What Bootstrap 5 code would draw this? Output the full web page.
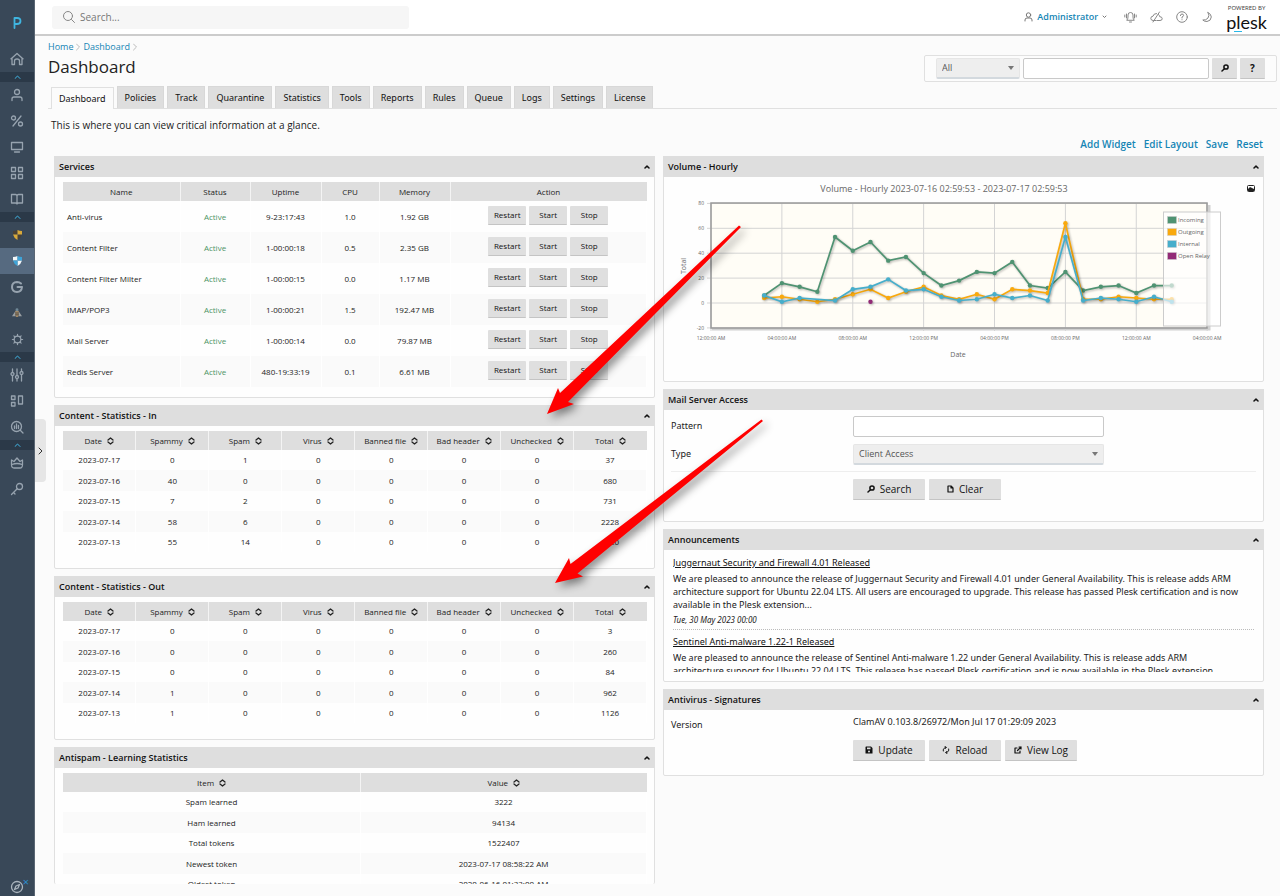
<!DOCTYPE html>
<html lang="en">
<head>
<meta charset="utf-8">
<meta name="viewport" content="width=device-width, initial-scale=1">
<title>Dashboard - Plesk</title>
<link href="https://cdn.jsdelivr.net/npm/bootstrap@5.3.0/dist/css/bootstrap.min.css" rel="stylesheet">
<style>
:root{--edge:#e0e0e0;--bar:#dedede;--ink:#222;--accent:#1585b5}
body{font:10px/14px "Open Sans",sans-serif;color:var(--ink);background:#fbfbfb}
button,input,select{font-family:inherit}
.shell{min-height:100vh;max-height:100vh;overflow:hidden}
svg.ico{fill:none;stroke:currentColor;stroke-width:1.5;stroke-linecap:round;stroke-linejoin:round;display:block}
/* sidebar */
.rail{width:35px;flex:none;background:#394858;border-right:1px solid #5a6673;color:#97a3af}
.rail a{height:26px;color:inherit;text-decoration:none}
.rail a.brand{height:46px;color:#3fb5e0}
.rail a.here{background:#566a80}
.rail button{height:10px;border:0;padding:0;background:#2b3948;color:#41b6e6}
.rail .tour{height:16px;color:#aab4bd}
.rail .tour i{top:-4px;right:-5px;color:#2c8fd0;font:11px/11px "Open Sans",sans-serif}
.opener{top:419px;left:35px;width:11px;height:63px;border:0;background:#e6e6e6;border-radius:0 4px 4px 0;padding:0;color:#333;z-index:2}
/* top bar */
.topbar{height:36px;background:#fff;border-bottom:2px solid #ccc;padding:0 13px 0 17px;color:#777}
.finder{width:357px;height:23px;background:#f6f6f6;border-radius:3px;padding-left:10px;color:#888}
.finder input{border:0;background:none;font-size:10px;outline:0;color:#666;padding:0}
.finder input::placeholder{color:#777}
.tools{gap:13px}
.tools a{color:#888}
.tools a.acct{color:var(--accent);font-size:9px;font-weight:600;text-decoration:none}
.powered{font:6px/9px "Noto Sans",sans-serif;color:#444}
.plesk{font:18px/18px Lato,sans-serif;color:#111}
.plesk::after{content:"";position:absolute;left:8px;bottom:-1px;width:8px;height:1px;background:#28b8e8}
/* headings */
.crumbs{font-size:9px;line-height:14px;gap:3px}
.crumbs a,.links a{color:var(--accent);text-decoration:none}
h1{font-size:17px;line-height:26px;margin:0;font-weight:400}
.hunt{height:27px;border:1px solid var(--edge);background:#fcfcfc;padding:2px 11px;gap:3px;border-radius:2px}
.hunt select{width:84px}.hunt input{width:186px}
.hunt .act{width:25px;min-width:25px}
.field,.pick{height:21px;border-radius:2px;font-size:9px;line-height:14px;color:#555;padding:0 5px}
.field{border:1px solid #c9c9c9;background:#fff}
.pick{border:1px solid #e6e6e6;border-bottom:2px solid #d3d9de;appearance:none;background:#eee url("data:image/svg+xml,%3Csvg xmlns='http://www.w3.org/2000/svg' viewBox='0 0 6 4'%3E%3Cpath d='M0 0h6L3 4z' fill='%23777'/%3E%3C/svg%3E") no-repeat right 5px center/6px 4px}
.act{height:21px;min-width:72px;border:0;border-bottom:1px solid #c4c4c4;background:#dfdfdf;border-radius:1px;font-size:10px;line-height:14px;padding:0 4px;color:#111;gap:5px}
.tabs{border-bottom:1px solid var(--edge);gap:3px;padding-left:3px}
.tabs a{height:22px;line-height:22px;padding:0 7px;background:var(--bar);border:1px solid #d8d8d8;border-bottom:0;color:#111;text-decoration:none;font-family:"Noto Sans",sans-serif;font-size:9px;white-space:nowrap}
.tabs a.on{background:#fbfbfb;border-color:var(--edge);margin-bottom:-1px}
.links{gap:8px;font-size:10px;font-weight:600}
/* widgets */
.cols{gap:8px;padding:5px 16px 0 19px}
.stack{gap:7px;flex:1 1 0;min-width:0}
.panel{border:1px solid var(--edge);background:#fefefe;border-radius:2px}
.panel>header{height:21px;margin:-1px;padding:0 5px 0 5px;background:var(--bar)}
h2{font-size:9px;line-height:21px;font-weight:600;color:#111;margin:0}
.panel>header button{border:0;background:none;padding:0;color:#111}
.grid{width:100%;table-layout:fixed;border-collapse:collapse;font-size:8px;line-height:12px;text-align:center}
.grid th{height:19px;background:var(--bar);font-weight:400;padding:0;border-right:1px solid #f4f4f4}
.grid th:last-child{border-right:0}
.grid td{height:20px;padding:0;border-right:1px solid #fff}
.grid tr:nth-child(even) td{background:#fafafa;height:21px}
.grid th svg{display:inline-block;margin-left:5px;vertical-align:-1px}
.body-t{padding:6px 7px 0 8px}
.svc td,.svc tr:nth-child(even) td{height:31px}
.svc td:first-child{text-align:left;padding-left:4px}
.svc td:last-child{padding-bottom:3px}
.svc .ok{color:#4d9465}
.svc .act{min-width:38px;height:19px;font-size:8px}
.form-l{width:182px;flex:none}
.form-r{width:251px}
.small-f{font-family:"Noto Sans",sans-serif;font-size:9px}
.news{height:117px;margin:6px 9px 0;overflow:hidden;line-height:13px;font-family:"Noto Sans",sans-serif;font-size:9px}
.news a{color:#111;text-decoration:underline;line-height:16px}
.news p{margin:1px 0 2px}
.news em{font-size:8px;line-height:14px}
.news hr{margin:2px 0 4px;border:0;border-top:1px dotted #bbb;opacity:1}
.chart text{font-family:"Open Sans",sans-serif;fill:#666}
.notes{left:0;top:0;pointer-events:none;z-index:3}
</style>
</head>
<body>
<div class="shell d-flex position-relative">
<nav class="rail d-flex flex-column" id="rail" aria-label="Main"></nav>
<button class="opener position-absolute d-flex align-items-center justify-content-center" aria-label="Open menu"><svg class="ico" width="5" height="8" viewBox="0 0 5 8" style="stroke-width:1"><path d="M1 1l3 3-3 3"/></svg></button>

<div class="flex-grow-1 d-flex flex-column" style="min-width:0">
<header class="topbar d-flex align-items-center justify-content-between">
  <div class="finder d-flex align-items-center gap-1">
    <svg class="ico" width="14" height="14" viewBox="0 0 14 14" style="stroke-width:1"><circle cx="6" cy="6" r="4.5"/><path d="M9.5 9.5l3 3"/></svg>
    <input type="search" placeholder="Search..." aria-label="Search">
  </div>
  <div class="tools d-flex align-items-center">
    <div class="d-flex align-items-center gap-1 me-1">
    <svg class="ico" width="9" height="10" viewBox="0 0 9 10" style="stroke-width:1"><circle cx="4.500" cy="3" r="2.200"/><path d="M1 9V8q0-2 2-2h3q2 0 2 2v1"/></svg>
    <a class="acct" href="#">Administrator</a>
    <svg class="ico" width="5" height="4" viewBox="0 0 5 4" style="stroke-width:1"><path d="M1 1l1.500 1.500L4 1"/></svg>
    </div>
    <a href="#" aria-label="Notifications"><svg class="ico" width="13" height="12" viewBox="0 0 13 12" style="stroke-width:1"><path d="M3 9q1-1 1-3V4q0-2.500 2.500-2.500T9 4v2q0 2 1 3zM5.500 11h2M2.500 3v4M.8 4v2M10.500 3v4M12.200 4v2"/></svg></a>
    <a href="#" aria-label="Cloud"><svg class="ico" width="13" height="12" viewBox="0 0 13 12" style="stroke-width:1"><path d="M6 9.500H3.200Q.8 9.500.8 7.300 1 5.200 3 5.200 3.500 2.500 6.500 2.500M8.500 3.500q1.200.8 1.200 2.200 2.500 0 2.500 2 0 1.800-2.200 1.800H7M3 11l6.500-10"/></svg></a>
    <a href="#" aria-label="Help"><svg class="ico" width="12" height="12" viewBox="0 0 12 12" style="stroke-width:1"><circle cx="6" cy="6" r="5.300"/><path d="M4.400 4.600q.1-1.600 1.600-1.600t1.600 1.400Q7.600 5.400 6 6v1M6 8.700v.1"/></svg></a>
    <a href="#" aria-label="Dark mode"><svg class="ico" width="12" height="12" viewBox="0 0 10 12" style="stroke-width:1"><path d="M6 1.500q3.300 1.500 3.300 4.500Q9 10 5 10.500 2 10.500.8 9 4 9.500 6 7t0-5.500z"/></svg></a>
    <div class="text-center"><div class="powered">POWERED BY</div><div class="plesk position-relative">plesk</div></div>
  </div>
</header>

<main class="flex-grow-1">
  <div class="d-flex justify-content-between" style="padding:4px 3px 0 13px">
    <div class="pb-1">
      <nav class="crumbs d-flex align-items-center" aria-label="Breadcrumb"><a href="#">Home</a><svg class="ico" width="4" height="8" viewBox="0 0 4 8" style="stroke:#bbb;stroke-width:1"><path d="M.5 1l3 3-3 3"/></svg><a href="#">Dashboard</a><svg class="ico" width="4" height="8" viewBox="0 0 4 8" style="stroke:#bbb;stroke-width:1"><path d="M.5 1l3 3-3 3"/></svg></nav>
      <h1>Dashboard</h1>
    </div>
    <form class="hunt d-flex align-items-center align-self-end" style="margin-bottom:2px" onsubmit="return false">
      <select class="pick" aria-label="Scope"><option>All</option></select>
      <input class="field" type="text" aria-label="Term">
      <button class="act d-flex align-items-center justify-content-center" aria-label="Search"><svg class="ico" width="8" height="8" viewBox="0 0 8 8"><circle cx="5" cy="3" r="2.100"/><path d="M3.400 4.800L1 7"/></svg></button>
      <button class="act fw-bold" type="button" aria-label="Help">?</button>
    </form>
  </div>
  <div style="padding:2px 3px 0 13px"><nav class="tabs d-flex align-items-end" id="tabs"></nav></div>
  <p class="mb-0" style="padding:9px 16px 5px">This is where you can view critical information at a glance.</p>
  <div class="links d-flex justify-content-end" style="padding-right:17px"><a href="#">Add Widget</a><a href="#">Edit Layout</a><a href="#">Save</a><a href="#">Reset</a></div>

  <div class="cols d-flex">
    <div class="stack d-flex flex-column">
      <section class="panel" data-title="Services"><div class="body-t" style="padding-bottom:10px">
        <table class="grid svc"><colgroup><col style="width:117px"><col style="width:70px"><col style="width:71px"><col style="width:58px"><col style="width:71px"><col></colgroup>
        <thead><tr><th>Name</th><th>Status</th><th>Uptime</th><th>CPU</th><th>Memory</th><th>Action</th></tr></thead><tbody id="services"></tbody></table></div></section>
      <section class="panel" data-title="Content - Statistics - In"><div class="body-t" style="padding-bottom:16px"><table class="grid" id="in"></table></div></section>
      <section class="panel" data-title="Content - Statistics - Out"><div class="body-t" style="padding-bottom:16px"><table class="grid" id="out"></table></div></section>
      <section class="panel border-bottom-0" data-title="Antispam - Learning Statistics"><div class="body-t overflow-hidden" style="height:117px"><table class="grid" id="learn"><colgroup><col style="width:51%"><col></colgroup></table></div></section>
    </div>
    <div class="stack d-flex flex-column">
      <section class="panel" data-title="Volume - Hourly"><svg class="chart d-block w-100" id="chart" viewBox="664 176 599 205" role="img" aria-label="Hourly mail volume"></svg></section>
      <section class="panel" data-title="Mail Server Access">
        <form style="padding:7px 7px 21px" onsubmit="return false">
          <div class="d-flex align-items-center mb-2" style="height:20px"><label class="form-l small-f" for="pattern">Pattern</label><input class="field form-r" id="pattern" type="text"></div>
          <div class="d-flex align-items-center" style="height:20px"><label class="form-l small-f" for="type">Type</label><select class="pick form-r" id="type"><option>Client Access</option></select></div>
          <hr style="margin:7px 0;opacity:1;border-color:#eee">
          <div class="d-flex gap-1" style="padding-left:182px">
            <button class="act d-flex align-items-center justify-content-center"><svg class="ico" width="8" height="8" viewBox="0 0 8 8"><circle cx="5" cy="3" r="2.100"/><path d="M3.400 4.800L1 7"/></svg>Search</button>
            <button class="act d-flex align-items-center justify-content-center" type="button"><svg class="ico" width="7" height="8" viewBox="0 0 7 8" style="stroke-width:1.200"><path d="M1 1h3l2 2v4H1zM4 1v2h2"/></svg>Clear</button>
          </div>
        </form></section>
      <section class="panel" data-title="Announcements"><div style="padding-bottom:9px"><div class="news">
        <a href="#">Juggernaut Security and Firewall 4.01 Released</a>
        <p>We are pleased to announce the release of Juggernaut Security and Firewall 4.01 under General Availability. This is release adds ARM architecture support for Ubuntu 22.04 LTS. All users are encouraged to upgrade. This release has passed Plesk certification and is now available in the Plesk extension...</p>
        <em>Tue, 30 May 2023 00:00</em><hr>
        <a href="#">Sentinel Anti-malware 1.22-1 Released</a>
        <p>We are pleased to announce the release of Sentinel Anti-malware 1.22 under General Availability. This is release adds ARM<br>architecture support for Ubuntu 22.04 LTS. This release has passed Plesk certification and is now available in the Plesk extension</p>
      </div></div></section>
      <section class="panel" data-title="Antivirus - Signatures"><div style="padding:6px 7px 14px">
        <div class="d-flex mb-2 small-f"><div class="form-l" style="padding-top:3px">Version</div><div>ClamAV 0.103.8/26972/Mon Jul 17 01:29:09 2023</div></div>
        <div class="d-flex gap-1" style="padding-left:182px">
          <button class="act d-flex align-items-center justify-content-center"><svg width="8" height="8" viewBox="0 0 8 8"><path fill="#111" fill-rule="evenodd" d="M1 .5h5L7.500 2v5.500H.5V1zM2 1.500v1.800h3.500V1.500zM4 4.500a1 1 0 100 2 1 1 0 000-2z"/></svg>Update</button>
          <button class="act d-flex align-items-center justify-content-center"><svg class="ico" width="8" height="8" viewBox="0 0 8 8" style="stroke-width:1"><path d="M1.300 5q-.8-3 2.700-3.500M3 .3l1.200 1.200L3 2.700M6.700 3q.8 3-2.700 3.500M5 7.700L3.800 6.500 5 5.300"/></svg>Reload</button>
          <button class="act d-flex align-items-center justify-content-center"><svg class="ico" width="8" height="8" viewBox="0 0 8 8" style="stroke-width:1.200"><path d="M3 2H1v5h5V5M3.500 4.500L7 1M5 1h2v2"/></svg>View Log</button>
        </div></div></section>
    </div>
  </div>
</main>
</div>

<svg class="notes position-absolute" width="1280" height="896" viewBox="0 0 1280 896" aria-hidden="true">
  <g fill="#f00" style="filter:drop-shadow(4px 4px 4px rgba(0,0,0,.45))">
    <path d="M739 225.500L741 227 568 402 574 404 547 414 558 388 560 393z"/>
    <path d="M761.500 419.500L763 421 577.500 573.500 583 576.500 555 583 569 558 570.500 564z"/>
  </g>
</svg>
</div>
<script>
const $ = id => document.getElementById(id);

/* sidebar */
const wrap = (b, s = 14) => `<svg class="ico" width="${s}" height="${s}" viewBox="0 0 14 14" style="stroke-width:1.300">${b}</svg>`;
const shield = (a, b) => `<svg width="9" height="10" viewBox="0 0 10 11"><path fill="${a}" d="M5 0v5H0V1q3 0 5-1zM5 5h5q-1 4-5 6z"/><path fill="${b}" d="M5 0q2 1 5 1v4H5zM0 5h5v6Q1 9 0 5z"/></svg>`;
const items = [
 ['Plesk', '<svg class="ico" width="9" height="12" viewBox="0 0 9 12" style="stroke-width:1.800"><path d="M1.500 11V1H4q3.500 0 3.500 3T4 7H2"/></svg>', 'brand'],
 ['Home', wrap('<path d="M2 6l5-4.500L12 6v6.500H9.500V9q0-2-2.500-2T4.500 9v3.500H2zM1 6.800L2 6M13 6.800L12 6"/>')], 0,
 ['Customers', wrap('<circle cx="7" cy="4" r="2.500"/><path d="M2 12.500V11q0-2 2-2h6q2 0 2 2v1.500"/>')],
 ['Discounts', wrap('<circle cx="3.500" cy="4" r="2"/><circle cx="10.500" cy="10" r="2"/><path d="M11 2L3 12"/>')],
 ['Domains', wrap('<path d="M1.500 2.500h11v7h-11zM4.500 12h5"/>')],
 ['Subscriptions', wrap('<path d="M1.500 1.500h4v4h-4zM8.500 1.500h4v4h-4zM1.500 8.500h4v4h-4zM8.500 8.500h4v4h-4z"/>')],
 ['Plans', wrap('<path d="M1.500 2.500h4Q7 2.500 7 4v8q0-1-1.500-1h-4zM12.500 2.500h-4Q7 2.500 7 4v8q0-1 1.500-1h4z"/>')], 0,
 ['Juggernaut', shield('#4a4136', '#d9a93a')], ['Warden', shield('#f3f6f8', '#3ea4d8'), 'here'],
 ['Google', wrap('<path style="stroke-width:2" d="M11 3.500Q9.500 2 7 2 2 2.300 2 7t5 5q4.500 0 5-5H7.500"/>')],
 ['Sentinel', '<svg width="10" height="10" viewBox="0 0 11 11"><path fill="#9a9fa3" d="M4 3L0 9h4zM7 3l4 6H7z"/><ellipse cx="5.500" cy="6" rx="2" ry="4" fill="#a58a66"/><path d="M3.500 5.500h4M3.500 7.500h4" stroke="#4a4a48"/><circle cx="5.500" cy="2" r="1.600" fill="#6f8796"/></svg>'],
 ['Settings', wrap('<circle cx="7" cy="7" r="3.600"/><path d="M7 1.500v1.500M7 11v1.500M1.500 7H3M11 7h1.500M3.100 3.100l1 1M9.900 9.900l1 1M3.100 10.900l1-1M9.900 4.100l1-1"/>', 13)], 0,
 ['Tools', wrap('<path d="M2.500 1v3M2.500 8v5M7 1v6M7 11v2M11.500 1v2M11.500 7v6"/><circle cx="2.500" cy="6" r="1.500"/><circle cx="7" cy="9" r="1.500"/><circle cx="11.500" cy="5" r="1.500"/>')],
 ['Extensions', wrap('<path d="M1.500 2h3.500v3.500H1.500zM1.500 8.500h3.500V12H1.500zM8.500 2h4v8h-4z"/>')],
 ['Monitoring', wrap('<circle cx="6.500" cy="6.500" r="5"/><path d="M10.500 10.500l2.500 2.500M4.500 6v2.500M6.500 4v4.500M8.500 5.500v3"/>')], 0,
 ['Licenses', wrap('<path d="M1.500 8.500V4L4 5.500 7 2l3 3.500L12.500 4v4.500Q12.500 12 10 12H4q-2.500 0-2.500-3.500zM2 8.500q5-2 10 0"/>')],
 ['Security', wrap('<circle cx="9.500" cy="4.500" r="3"/><path d="M7.200 6.800L1.500 12.500M3.500 10.500l1.500 1.500"/>')]
];
$('rail').innerHTML = items.map(i => i
  ? `<a href="#" aria-label="${i[0]}" class="d-flex align-items-center justify-content-center ${i[2] || ''}">${i[1]}</a>`
  : `<button aria-label="Toggle group" class="d-flex align-items-center justify-content-center"><svg class="ico" width="7" height="4" viewBox="0 0 7 4" style="stroke-width:1"><path d="M1 3.500L3.500 1 6 3.500"/></svg></button>`).join('')
  + `<a href="#" aria-label="Guide" class="tour mt-auto d-flex justify-content-center"><span class="position-relative">${wrap('<circle cx="7" cy="7" r="5.500"/><path d="M9.500 4.500L8 8 4.500 9.500 6 6z"/>')}<i class="position-absolute">×</i></span></a>`;

$('tabs').innerHTML = 'Dashboard Policies Track Quarantine Statistics Tools Reports Rules Queue Logs Settings License'.split(' ')
  .map((t, i) => `<a href="#" class="${i ? '' : 'on'}">${t}</a>`).join('');

document.querySelectorAll('[data-title]').forEach(p => p.insertAdjacentHTML('afterbegin',
  `<header class="d-flex align-items-center justify-content-between"><h2>${p.dataset.title}</h2><button aria-label="Collapse"><svg class="ico" width="6" height="4" viewBox="0 0 6 4"><path d="M1 3l2-2 2 2"/></svg></button></header>`));

/* tables */
$('services').innerHTML = [
 ['Anti-virus','9-23:17:43','1.0','1.92 GB'],['Content Filter','1-00:00:18','0.5','2.35 GB'],['Content Filter Milter','1-00:00:15','0.0','1.17 MB'],
 ['IMAP/POP3','1-00:00:21','1.5','192.47 MB'],['Mail Server','1-00:00:14','0.0','79.87 MB'],['Redis Server','480-19:33:19','0.1','6.61 MB']
].map(r => `<tr><td>${r[0]}</td><td class="ok">Active</td><td>${r[1]}</td><td>${r[2]}</td><td>${r[3]}</td><td><div class="d-flex justify-content-center" style="gap:3px"><button class="act">Restart</button><button class="act">Start</button><button class="act">Stop</button></div></td></tr>`).join('');
const sort = '<svg class="ico" width="7" height="8" viewBox="0 0 7 8" style="stroke-width:1.300"><path d="M1 3l2.500-2L6 3M1 5l2.500 2L6 5"/></svg>';
const fill = (id, head, rows) => $(id).insertAdjacentHTML('beforeend', `<thead><tr>${head.map(h => `<th>${h}${sort}</th>`).join('')}</tr></thead><tbody>${rows.map(r => `<tr>${r.map(c => `<td>${c}</td>`).join('')}</tr>`).join('')}</tbody>`);
const cols = ['Date','Spammy','Spam','Virus','Banned file','Bad header','Unchecked','Total'];
const days = (list) => list.map(([d, a, b, t]) => ['2023-07-' + d, a, b, 0, 0, 0, 0, t]);
fill('in', cols, days([[17,0,1,37],[16,40,0,680],[15,7,2,731],[14,58,6,2228],[13,55,14,1320]]));
fill('out', cols, days([[17,0,0,3],[16,0,0,260],[15,0,0,84],[14,1,0,962],[13,1,0,1126]]));
fill('learn', ['Item','Value'], [['Spam learned','3222'],['Ham learned','94134'],['Total tokens','1522407'],['Newest token','2023-07-17 08:58:22 AM'],['Oldest token','2020-06-16 01:33:00 AM']]);

/* hourly chart: values start at 03:00 */
const X = h => 711 + h * 17.72, Y = v => 303 - v * 1.245;
const series = [
 ['#4f9372', [6,16,13,9,53,42,49,34,37,24,14,18,25,24,33,14,12,25,10,13,14,8,14,14]],
 ['#f9a90d', [4,5,3,1,3,7,11,4,9,13,6,3,7,3,11,10,8,64,3,3,5,4,3,3]],
 ['#46aecb', [6,1,4,null,2,11,13,19,10,11,5,2,3,7,4,6,2,53,2,4,3,1,5,1]],
 ['#922a76', [null,null,null,null,null,null,1]]
];
let s = `<text x="944" y="192" font-size="9" text-anchor="middle">Volume - Hourly 2023-07-16 02:59:53 - 2023-07-17 02:59:53</text>
<path d="M712 329H1209V205" fill="none" stroke="#000" stroke-opacity=".18" stroke-width="3"/><rect x="711" y="203" width="497" height="125" fill="#fffdf6"/>`;
for (let v = -20; v <= 80; v += 20) s += `<path d="M707 ${Y(v)}H1208" stroke="#d4d4d4"/><text x="704" y="${Y(v) + 2}" font-size="5" text-anchor="end">${v}</text>`;
['12:00:00 AM','04:00:00 AM','08:00:00 AM','12:00:00 PM','04:00:00 PM','08:00:00 PM','12:00:00 AM','04:00:00 AM'].forEach((t, i) =>
  s += `<path d="M${X(i * 4)} 203V331" stroke="#d4d4d4"/><text x="${X(i * 4)}" y="340" font-size="5" text-anchor="middle">${t}</text>`);
s += `<rect x="711" y="203" width="496" height="125" fill="none" stroke="#999" stroke-width="1.500"/>
<text x="958" y="357" font-size="7" text-anchor="middle">Date</text><text transform="translate(686 266) rotate(-90)" font-size="7" text-anchor="middle">Total</text>`;
series.forEach(([c, v]) => {
  const p = v.map((n, i) => n === null ? null : [X(i + 3), Y(n)]).filter(Boolean);
  s += `<g style="filter:drop-shadow(1px 1px 1px rgba(0,0,0,.3))"><polyline points="${p.join(' ')}" fill="none" stroke="${c}" stroke-width="1.700"/>${p.map(q => `<circle cx="${q[0]}" cy="${q[1]}" r="2.200" fill="${c}"/>`).join('')}</g>`;
});
s += `<rect x="1163.500" y="212" width="57" height="114" fill="#fff" fill-opacity=".65" stroke="#ccc"/>`;
['Incoming','Outgoing','Internal','Open Relay'].forEach((t, i) => s += `<rect x="1167.500" y="${216.5 + i * 12}" width="9" height="7" fill="${series[i][0]}" stroke="#ccc" stroke-width=".5"/><text x="1178" y="${222 + i * 12}" font-size="6">${t}</text>`);
s += `<rect x="1247.500" y="185.500" width="7" height="6" rx="1" fill="none" stroke="#222"/><path d="M1248 191v-2l2-2 2 1 2 1v2z" fill="#222"/>`;
$('chart').innerHTML = s;
</script>
<script src="https://cdn.jsdelivr.net/npm/bootstrap@5.3.0/dist/js/bootstrap.bundle.min.js"></script>
</body>
</html>
